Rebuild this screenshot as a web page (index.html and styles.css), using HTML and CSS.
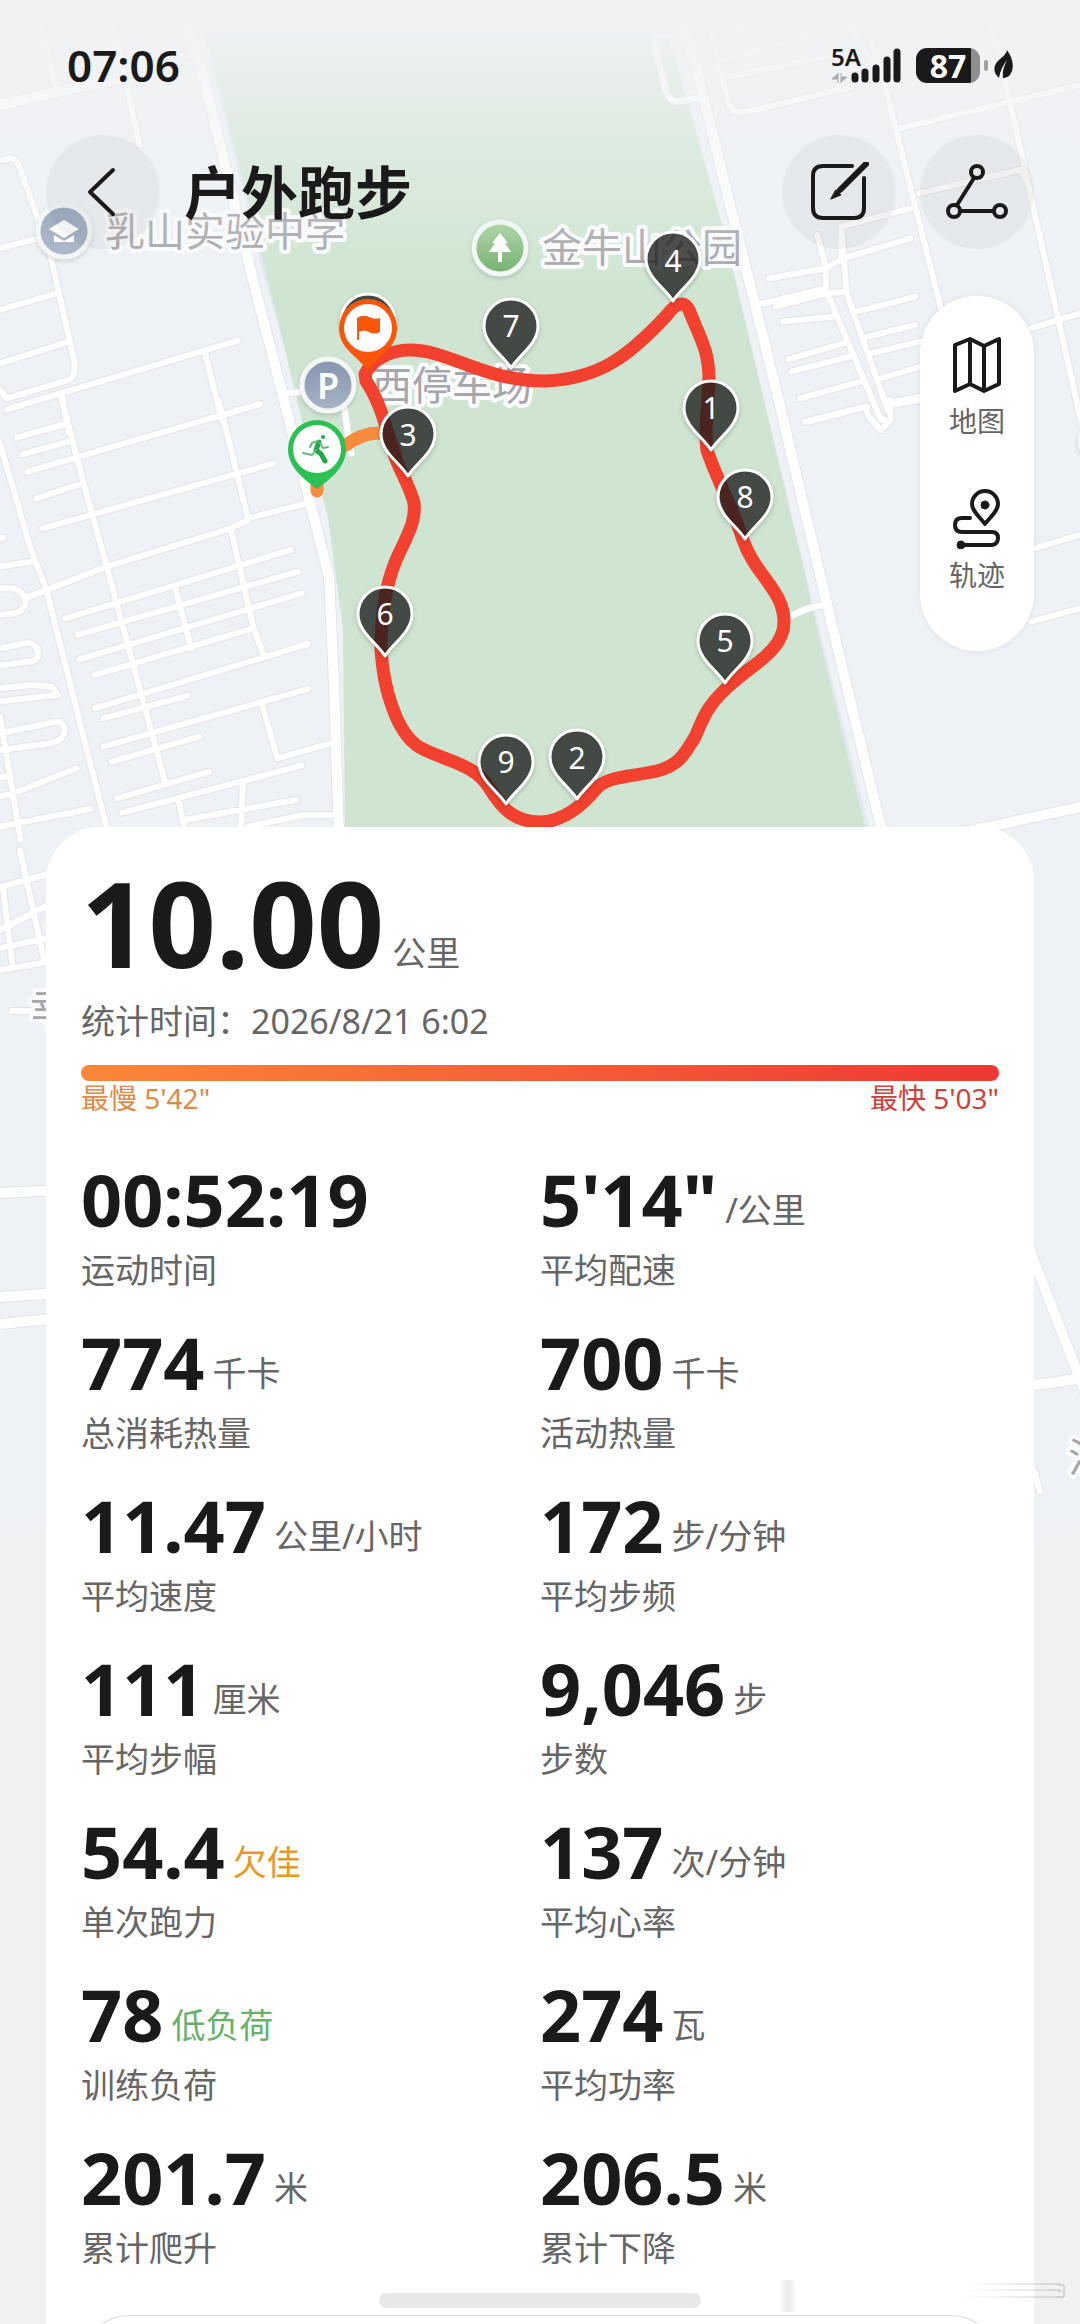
FILE: index.html
```html
<!DOCTYPE html>
<html lang="zh-CN">
<head>
  <meta charset="UTF-8" />
  <meta name="viewport" content="width=device-width, initial-scale=1" />
  <title>户外跑步</title>
  <link rel="stylesheet" href="styles.css">
</head>
<body>
  <div class="screen">
    <svg class="map" viewBox="0 0 1080 1600" aria-hidden="true">
      <defs>
        <linearGradient id="topFade" x1="0" y1="0" x2="0" y2="1">
          <stop offset="0" stop-color="#f1f2f4" />
          <stop offset="0.12" stop-color="#f1f2f4" stop-opacity="0.92" />
          <stop offset="0.5" stop-color="#f1f2f4" stop-opacity="0.45" />
          <stop offset="1" stop-color="#f1f2f4" stop-opacity="0" />
        </linearGradient>
        <linearGradient id="bottomFade" x1="0" y1="0" x2="0" y2="1">
          <stop offset="0" stop-color="#f0f1f3" stop-opacity="0" />
          <stop offset="1" stop-color="#f0f1f3" />
        </linearGradient>
        <linearGradient id="poiBlue" x1="0" y1="0" x2="0" y2="1">
          <stop offset="0" stop-color="#8695af" />
          <stop offset="1" stop-color="#a7b4c8" />
        </linearGradient>
        <linearGradient id="poiGreen" x1="0" y1="0" x2="0" y2="1">
          <stop offset="0" stop-color="#a0cf95" />
          <stop offset="1" stop-color="#6fae6c" />
        </linearGradient>

        <path id="pin" d="M0 0C-8 -13 -27 -24 -27 -42A27 27 0 0 1 27 -42C27 -24 8 -13 0 0Z" />

        <!-- small streets -->
        <g id="streets">
          <g transform="scale(0.3444 0.3333)">
            <path d="M110 40L165 270M325 60L405 435M0 315L340 245L365 230M440 170L560 165" />
            <path d="M0 480L35 475Q50 480 60 510L145 760L215 1080Q222 1130 200 1140L20 1195L0 1170M0 745L110 715M0 930L160 882M0 1090L200 1025" />
            <path d="M20 1228L690 1022M595 1060L645 1262M180 1190L200 1300M635 1250L755 1212M830 1180L880 1175M1000 1225L1010 1300L1020 1360" />
          </g>
          <g transform="translate(540 0) scale(0.3444 0.3333)">
            <path d="M440 100L350 105Q330 110 335 145L365 270Q375 305 400 305L470 292" />
            <path d="M495 90L545 300Q555 345 600 335L900 262M550 90L710 45M540 180L880 75M550 230L850 165" />
            <path d="M890 60L1000 250L1170 950M955 100L1005 270M1300 60L1350 240L1570 1260M1045 385L1568 255M1100 580L1400 508L1410 540M875 770L875 680L1075 625M805 705L830 800L830 870L990 1260M875 680L890 880L1010 1230M665 835L830 805L880 775L1075 715M640 912L830 865M685 920L830 880L890 875M705 965L850 950M920 935L1090 890M950 1010L1090 975M720 1078L880 1030M730 1115L900 1070M960 1060L1105 1025M755 1195L930 1145M990 1135L1105 1100M770 1265L945 1220M1010 1210L1105 1190M1425 985L1568 940M990 1250L1010 1270" />
          </g>
          <g transform="translate(0 400) scale(0.3444 0.3333)">
            <path d="M0 130L90 450L135 570L310 1285M180 0L240 240L310 500L480 1150M635 0L720 355L890 310M50 112L190 72M65 163L200 125M80 215L755 12M105 295L240 250M125 385L795 190M85 590L310 500L670 385L720 360M670 385L735 680L765 765M510 570L555 745M190 655L845 450M225 705L865 515M230 778L875 580M275 825L735 685M275 925L895 732M300 955L545 887M300 1040L895 867M760 910L805 1075L960 1030M325 1085L578 1010M340 1195L608 1115M355 1238L875 1097M520 1205L535 1285M705 1155L700 1285M535 1260L860 1200M720 1280L880 1245L970 1245" />
            <path d="M0 500L95 485M0 415L10 412M0 565L40 565Q75 580 75 610Q65 635 40 640L0 645M0 745L80 728Q115 735 110 770Q105 785 80 785L0 797M0 865L90 855L150 860L168 885L120 890L0 905M0 1000L165 965Q195 970 185 1005Q175 1022 150 1030L0 1050M0 950L60 1320M0 1130L15 1130M0 1190L40 1180L222 1105M0 1280L262 1227M75 590L100 585" />
            <path d="M945 20L955 50L990 90L1018 60L1015 0" transform="translate(1568 0)" />
            <path d="M780 65L950 20M1015 15L1105 0M1435 445L1568 405M1425 665L1568 625M735 645Q770 625 820 615" transform="translate(1568 0)" />
          </g>
          <path d="M20 850L44 960M0 887L48 874M3 888L12 962M0 930L48 905M0 948L48 938M0 970L48 962M12 1011H50M1034 1470L1040 1492" />
        </g>
        <!-- main roads -->
        <g id="roads">
          <path d="M186 20L205 83L218 136L254 284L284 400L312 510L329 577L334 683L339 840" />
          <path d="M678 10L696 67L733 217L754 300L781 410L826 600L884 840" />
          <path d="M0 105L110 80M965 832L1085 806M0 1193L60 1190M0 1297L60 1293M0 1324L60 1318M1026 1240L1090 1405M1020 1387L1085 1378" />
        </g>
      </defs>

      <rect class="land" width="1080" height="1600" />
      <path class="verge" d="M200 20L225 120L262 270L306 420L330 515L346 630L348 830H870L812 600L764 400L722 225L690 110L664 20Z" />
      <path class="park" d="M232 30L222 33L205 35L235 150L268 280L303 425L328 517L343 630L345 830H866L812 607L804 570L764 400L722 225L690 110L664 20Z" />
      <use href="#streets" class="casing streets" />
      <use href="#roads" class="casing roads" />
      <use href="#streets" class="streets" />
      <use href="#roads" class="roads" />

      <g class="place">
        <text x="105" y="246">乳山实验中学</text>
        <text x="542" y="262">金牛山公园</text>
        <text x="372" y="400">西停车场</text>
        <text x="30" y="1022">幸</text>
        <text x="1068" y="1472">法</text>
      </g>
      <g class="poi">
        <circle cx="64" cy="231" r="26" fill="url(#poiBlue)" />
        <path d="M49 229L64 220L79 229L64 238ZM54 235L64 241L74 235V242H54Z" />
        <circle cx="500" cy="248" r="26" fill="url(#poiGreen)" />
        <path d="M500 233L508 243H505L511 252H502V262H498V252H489L495 243H492Z" />
        <circle cx="328" cy="385" r="26" fill="url(#poiBlue)" />
        <text x="328" y="399">P</text>
        <circle cx="1098" cy="441" r="18" fill="#eef2f6" />
      </g>

      <rect width="1080" height="285" fill="url(#topFade)" />
      <rect y="1490" width="1080" height="60" fill="url(#bottomFade)" />
      <rect y="1550" width="1080" height="50" fill="#f0f1f3" />

      <!-- running track -->
      <path class="track start" d="M317 491V478Q322 454 346 445Q362 433 379 433Q392 436 396 455" />
      <path class="track" d="M365 374C372 360 390 350 410 350C450 350 482 381 545 381C600 379 630 355 667 315C676 303 684 300 689 310C700 338 709 350 709 380C708 410 704 430 707 450C716 478 732 505 743 540C755 575 784 590 784 622C784 650 752 665 736 680C705 705 703 720 695 737C685 753 680 765 657 771C630 777 606 776 595 790C582 806 562 822 540 822C512 822 500 805 490 789C476 765 450 762 425 750C395 738 383 683 381 650C381 610 386 585 396 560C410 530 416 520 414 503C410 485 396 465 393 450C384 420 379 400 366 381Z" />

      <g class="km">
        <use href="#pin" x="368" y="363" />
        <use href="#pin" x="711" y="450" /><text x="711" y="419">1</text>
        <use href="#pin" x="577" y="799" /><text x="577" y="769">2</text>
        <use href="#pin" x="408" y="476" /><text x="408" y="446">3</text>
        <use href="#pin" x="673" y="301" /><text x="673" y="272">4</text>
        <use href="#pin" x="725" y="683" /><text x="725" y="652">5</text>
        <use href="#pin" x="385" y="656" /><text x="385" y="625">6</text>
        <use href="#pin" x="511" y="368" /><text x="511" y="337">7</text>
        <use href="#pin" x="745" y="539" /><text x="745" y="508">8</text>
        <use href="#pin" x="506" y="804" /><text x="506" y="773">9</text>
      </g>

      <g class="finish">
        <path d="M368 371C358 356 339 349 339 328A29 29 0 0 1 397 328C397 349 378 356 368 371Z" />
        <circle cx="368" cy="328" r="24" />
        <path d="M357 318Q363 314 369 317T380 318V332Q374 335 369 332T359 332V340H357Z" />
      </g>
      <g class="begin">
        <path d="M317 489C307 481 288 469 288 449A29 29 0 0 1 346 449C346 469 327 481 317 489Z" />
        <circle cx="317" cy="449" r="24" />
        <circle class="head" cx="323" cy="437" r="2" />
        <path class="limb" d="M319 442L316 450L321 454L325 461" />
        <path class="joint" d="M318 441L312 443L310 447M320 443L323 448L328 447M316 450L312 455L303 453" />
      </g>
    </svg>

    <div class="status">
      <span class="clock">07:06</span>
      <div class="indicators">
        <div class="network">
          <span>5A</span>
          <svg width="17" height="10" viewBox="0 0 17 10" aria-hidden="true"><path d="M7 0V10M7 1L1 6H7M10 0V10M10 9L16 4H10" /></svg>
        </div>
        <svg class="signal" width="50" height="35" viewBox="0 0 50 35" aria-hidden="true"><path d="M4 28V31M14 24V31M25 20V31M36 12V31M46 4V31" /></svg>
        <div class="battery">87</div>
        <svg class="leaf" width="19" height="30" viewBox="0 0 19 30" aria-hidden="true"><path d="M13 0C18 7 20 14 18 21C16 26 13 28 9 28C8 22 10 16 13 10C9 15 6 21 5 28C-1 23 -1 16 4 11C8 7 12 5 13 0Z" /></svg>
      </div>
    </div>

    <header class="topbar">
      <button class="round" aria-label="返回">
        <svg width="60" height="60" viewBox="0 0 60 60"><path d="M40 8L17 30L40 52" /></svg>
      </button>
      <h1>户外跑步</h1>
      <button class="round" aria-label="编辑">
        <svg width="60" height="60" viewBox="0 0 60 60">
          <path d="M43 4H14Q4 4 4 14V46Q4 56 14 56H45Q55 56 55 46V16" />
          <path class="pen" d="M57 2L31 28" />
          <path class="solid" d="M27 28L32 33L22 37Z" />
        </svg>
      </button>
      <button class="round" aria-label="分享">
        <svg width="64" height="60" viewBox="0 0 64 60">
          <circle cx="32" cy="10" r="6" /><circle cx="9" cy="49" r="6" /><circle cx="55" cy="49" r="6" />
          <path d="M29 16L12 43M15 49H49" />
        </svg>
      </button>
    </header>

    <nav class="tools">
      <button>
        <svg width="54" height="60" viewBox="0 0 54 60"><path d="M5 10L20 4L34 11L49 4V49L34 56L20 49L5 56ZM20 4V49M34 11V56" /></svg>
        地图
      </button>
      <button>
        <svg width="54" height="60" viewBox="0 0 54 60">
          <path d="M35 35C31 29 22 23 22 15A13 13 0 0 1 48 15C48 23 39 29 35 35Z" />
          <path d="M20 29H12Q5 29 5 36T12 43H42Q48 43 48 49T42 56H12" />
          <circle class="solid" cx="35" cy="16" r="4" /><circle class="solid" cx="11" cy="56" r="4" />
        </svg>
        轨迹
      </button>
    </nav>

    <main class="card">
      <div class="distance"><strong>10.00</strong><span>公里</span></div>
      <p class="date">统计时间：2026/8/21 6:02</p>
      <div class="pace-bar"></div>
      <div class="pace"><span>最慢 5'42"</span><span class="fast">最快 5'03"</span></div>

      <dl class="stats">
        <div class="stat"><dd><b>00:52:19</b></dd><dt>运动时间</dt></div>
        <div class="stat"><dd><b>5'14"</b><span>/公里</span></dd><dt>平均配速</dt></div>
        <div class="stat"><dd><b>774</b><span>千卡</span></dd><dt>总消耗热量</dt></div>
        <div class="stat"><dd><b>700</b><span>千卡</span></dd><dt>活动热量</dt></div>
        <div class="stat"><dd><b>11.47</b><span>公里/小时</span></dd><dt>平均速度</dt></div>
        <div class="stat"><dd><b>172</b><span>步/分钟</span></dd><dt>平均步频</dt></div>
        <div class="stat"><dd><b>111</b><span>厘米</span></dd><dt>平均步幅</dt></div>
        <div class="stat"><dd><b>9,046</b><span>步</span></dd><dt>步数</dt></div>
        <div class="stat"><dd><b>54.4</b><span class="poor">欠佳</span></dd><dt>单次跑力</dt></div>
        <div class="stat"><dd><b>137</b><span>次/分钟</span></dd><dt>平均心率</dt></div>
        <div class="stat"><dd><b>78</b><span class="low">低负荷</span></dd><dt>训练负荷</dt></div>
        <div class="stat"><dd><b>274</b><span>瓦</span></dd><dt>平均功率</dt></div>
        <div class="stat"><dd><b>201.7</b><span>米</span></dd><dt>累计爬升</dt></div>
        <div class="stat"><dd><b>206.5</b><span>米</span></dd><dt>累计下降</dt></div>
      </dl>
      <section class="next"></section>
    </main>

    <div class="home-bar"></div>
    <svg class="smudge" width="300" height="40" viewBox="0 0 300 40" aria-hidden="true">
      <defs>
        <linearGradient id="smear">
          <stop offset="0" stop-color="#999" stop-opacity="0" />
          <stop offset="1" stop-color="#999" stop-opacity="0.3" />
        </linearGradient>
        <linearGradient id="streak">
          <stop offset="0" stop-color="#888" stop-opacity="0" />
          <stop offset="0.5" stop-color="#888" stop-opacity="0.2" />
          <stop offset="1" stop-color="#888" stop-opacity="0" />
        </linearGradient>
      </defs>
      <rect x="0" y="4" width="16" height="32" fill="url(#streak)" />
      <path fill="url(#smear)" d="M180 7H280V9H180ZM180 13H280V15H180ZM180 20H280V22H180Z" />
      <path fill="none" stroke="#bbb" d="M278 9H284V21H278M278 15H282" />
    </svg>
  </div>
</body>
</html>
```
FILE: styles.css
```css
* {
  box-sizing: border-box;
}
body {
  margin: 0;
  font-family: "Noto Sans", "Noto Sans CJK SC", sans-serif;
  background: #f0f1f3;
  color: #1a1a1a;
}
h1, p, dl, dd {
  margin: 0;
}
button {
  border: none;
  padding: 0;
  font-family: inherit;
  color: inherit;
  cursor: pointer;
}
.screen {
  position: relative;
  height: 100vh;
  overflow: hidden;
}

/* map */
.map {
  position: absolute;
  top: 0;
  left: 0;
  width: 100%;
}
.land {
  fill: #eef2f6;
}
.verge {
  fill: #e3e9f2;
}
.park {
  fill: #cfe5d1;
}
.streets, .roads {
  fill: none;
  stroke: #fff;
  stroke-linecap: round;
  stroke-linejoin: round;
}
.streets {
  stroke-width: 6px;
}
#streets path {
  vector-effect: non-scaling-stroke;
}
.roads {
  stroke-width: 10px;
}
.casing {
  stroke: #e3e4ea;
}
.casing.streets {
  stroke-width: 8px;
}
.casing.roads {
  stroke-width: 12px;
}
.place text {
  font-size: 40px;
  fill: #a6a6aa;
  stroke: #fafbfc;
  stroke-width: 8px;
  stroke-linejoin: round;
  paint-order: stroke;
}
.poi circle {
  stroke: #f3f7f6;
  stroke-width: 5px;
  filter: drop-shadow(0 2px 2px rgba(0,0,0,0.15));
}
.poi path, .poi text {
  fill: #fff;
}
.poi text {
  font-size: 36px;
  font-weight: 600;
  text-anchor: middle;
}
.track {
  fill: none;
  stroke: #f2412f;
  stroke-width: 13px;
  stroke-linecap: round;
  stroke-linejoin: round;
}
.track.start {
  stroke: #f78a3c;
}
.km use {
  fill: rgba(28,30,28,0.74);
  stroke: #fff;
  stroke-width: 3px;
  stroke-linejoin: round;
  filter: drop-shadow(0 2px 2px rgba(0,0,0,0.2));
}
.km text {
  font-size: 30px;
  fill: #fff;
  text-anchor: middle;
}
.finish path {
  fill: #fb5607;
}
.finish circle, .begin circle {
  fill: #fff;
}
.begin path {
  fill: #2bc153;
}
.begin .head {
  fill: #22a74a;
}
.begin .limb, .begin .joint {
  fill: none;
  stroke: #22a74a;
  stroke-width: 5px;
  stroke-linecap: round;
  stroke-linejoin: round;
}
.begin .joint {
  stroke: #5dbd78;
  stroke-width: 2px;
}

/* status bar */
.status {
  position: relative;
  display: flex;
  align-items: center;
  justify-content: space-between;
  height: 130px;
  padding: 0 67px;
}
.clock {
  font-size: 44px;
  font-weight: 600;
}
.indicators {
  display: flex;
  align-items: center;
}
.network {
  display: flex;
  flex-direction: column;
  justify-content: space-between;
  height: 35px;
  width: 20px;
  font-size: 24px;
  line-height: 18px;
  font-weight: 600;
}
.network svg {
  fill: #aaa;
  stroke: #aaa;
}
.signal {
  margin-right: 15px;
  stroke: #1a1a1a;
  stroke-width: 7px;
  stroke-linecap: round;
}
.battery {
  position: relative;
  width: 64px;
  height: 35px;
  border-radius: 11px;
  background: linear-gradient(to right, #1a1a1a 86%, #8e8e90 86%);
  color: #fff;
  font-size: 32px;
  line-height: 35px;
  font-weight: 700;
  text-align: center;
}
.battery::after {
  content: "";
  position: absolute;
  top: 12px;
  right: -8px;
  width: 4px;
  height: 11px;
  border-radius: 2px;
  background: #a0a0a2;
}
.leaf {
  margin-left: 14px;
  fill: #1a1a1a;
}

/* title row */
.topbar {
  position: relative;
  display: flex;
  align-items: center;
  gap: 24px;
  padding: 5px 46px 0;
}
.topbar h1 {
  flex: 1;
  font-size: 57px;
  line-height: 80px;
  font-weight: 700;
}
.round {
  display: flex;
  align-items: center;
  justify-content: center;
  width: 114px;
  height: 114px;
  border-radius: 50%;
  background: rgba(0,0,0,0.04);
}
.round svg, .tools svg {
  fill: none;
  stroke: #1a1a1a;
  stroke-width: 4px;
  stroke-linecap: round;
  stroke-linejoin: round;
}
.round .pen {
  stroke-width: 6px;
}
.round .solid, .tools .solid {
  fill: #1a1a1a;
  stroke-width: 1px;
}
.tools {
  position: relative;
  display: flex;
  flex-direction: column;
  gap: 48px;
  width: 114px;
  margin: 47px 46px 176px auto;
  padding: 39px 0 56px;
  border-radius: 57px;
  background: #fff;
  box-shadow: 0 0 6px rgba(0,0,0,0.08);
}
.tools button {
  display: flex;
  flex-direction: column;
  align-items: center;
  gap: 6px;
  background: none;
  color: #666;
  font-size: 28px;
  line-height: 40px;
}

/* summary card */
.card {
  position: relative;
  margin: 0 46px;
  padding: 36px 35px 0;
  border-radius: 54px 54px 0 0;
  background: #fff;
}
.distance, .stat dd {
  display: flex;
  align-items: flex-end;
  gap: 8px;
}
.distance strong {
  font-size: 118px;
  line-height: 120px;
}
.distance span, .stat span {
  margin-bottom: 6px;
}
.distance span, .stat span, .stat dt, .date {
  font-size: 34px;
  line-height: 48px;
  color: #666;
}
.date {
  margin-top: 14px;
}
.pace-bar {
  height: 16px;
  margin-top: 20px;
  border-radius: 8px;
  background: linear-gradient(to right, #fa873a, #ed3833);
}
.pace {
  display: flex;
  justify-content: space-between;
  font-size: 28px;
  line-height: 34px;
  color: #e08a45;
}
.pace .fast {
  color: #d0403a;
}
.stats {
  display: grid;
  grid-template-columns: 1fr 1fr;
  row-gap: 27px;
  margin-top: 43px;
}
.stat {
  display: flex;
  flex-direction: column;
  gap: 6px;
}
.stat b {
  font-size: 72px;
  line-height: 82px;
}
.stat .poor {
  color: #e9981f;
}
.stat .low {
  color: #67b168;
}
.next {
  height: 300px;
  margin-top: 43px;
  border: 1px solid #dcd8d4;
  border-radius: 48px;
}
.home-bar {
  position: absolute;
  left: 50%;
  bottom: 16px;
  width: 322px;
  height: 15px;
  margin-left: -161px;
  border-radius: 8px;
  background: #e8e8e8;
}
.smudge {
  position: absolute;
  right: 0;
  bottom: 8px;
}
```
